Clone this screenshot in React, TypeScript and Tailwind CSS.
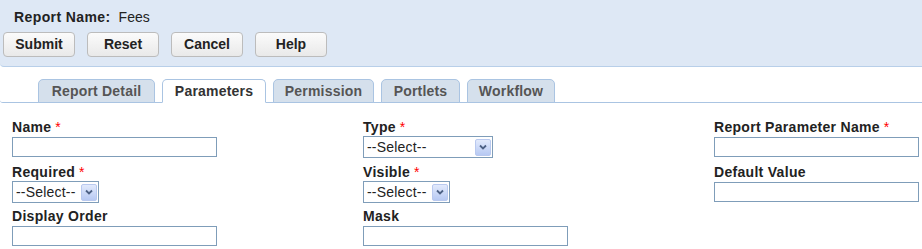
const buttons = ['Submit', 'Reset', 'Cancel', 'Help'];

const tabs = [
  { label: 'Report Detail', w: 'w-[117px]' },
  { label: 'Parameters', w: 'w-[104px]', active: true },
  { label: 'Permission', w: 'w-[101px]' },
  { label: 'Portlets', w: 'w-[79px]' },
  { label: 'Workflow', w: 'w-[88px]' },
];

function Label({ text, required }: { text: string; required?: boolean }) {
  return (
    <div className="h-[16px] leading-[16px] mb-[1px] font-bold tracking-[0.3px] text-[#222] whitespace-nowrap">
      {text}
      {required && <span className="text-[#ff0000] font-normal ml-[4px]">*</span>}
    </div>
  );
}

function TextBox({ w = 'w-[205px]' }: { w?: string }) {
  return <input type="text" className={`${w} h-[20px] border border-[#7f9db9] bg-white outline-none`} />;
}

function Select({ w }: { w: string }) {
  return (
    <div className={`${w} h-[22px] flex items-center border border-[#7f9db9] bg-white pr-[1px]`}>
      <select className="flex-1 min-w-0 h-full appearance-none bg-transparent outline-none pl-[3px] text-[14px] tracking-[0.2px] text-[#222]">
        <option>--Select--</option>
      </select>
      <span className="w-[16px] h-[17px] flex items-center justify-center rounded-[2px] border border-[#b9c9ef] bg-gradient-to-b from-[#e2eafc] to-[#b7c9f3]">
        <svg width="8" height="6" viewBox="0 0 8 6">
          <path d="M1 1.5 L4 4.5 L7 1.5" stroke="#4d6185" strokeWidth="1.8" fill="none" />
        </svg>
      </span>
    </div>
  );
}

export default function App() {
  return (
    <div className="w-[922px] h-[249px] bg-white text-[14px] font-['Liberation_Sans',Arial,sans-serif] overflow-hidden">
      <div className="h-[67px] bg-[#dee8f5] border-b border-[#b8cfe9] rounded-bl-[4px] pt-[9px]">
        <div className="h-[16px] leading-[16px] pl-[14px] text-[#222]">
          <span className="font-bold tracking-[0.4px]">Report Name:</span>
          <span className="ml-[8px]">Fees</span>
        </div>
        <div className="flex gap-[12px] pl-[3px] mt-[7px]">
          {buttons.map((b) => (
            <button
              key={b}
              className="w-[72px] h-[25px] rounded-[4px] border border-[#bcbcbc] bg-gradient-to-b from-[#fbfbfb] to-[#e9e9e9] font-bold text-[#222] text-[14px]"
            >
              {b}
            </button>
          ))}
        </div>
      </div>

      <div className="mt-[12px] flex items-end gap-[7px] pl-[38px] border-b border-[#aac4e2] rounded-bl-[3px] h-[24px]">
        {tabs.map((t) => (
          <div
            key={t.label}
            className={`${t.w} h-[24px] -mb-[1px] flex items-center justify-center rounded-t-[5px] border border-[#aac4e2] font-bold tracking-[0.2px] ${
              t.active ? 'bg-white border-b-white text-[#333]' : 'bg-[#d5e0ec] text-[#555]'
            }`}
          >
            {t.label}
          </div>
        ))}
      </div>

      <div className="grid grid-cols-[351px_351px_1fr] grid-rows-[45px_44px_auto] pl-[12px] pt-[16px]">
        <div>
          <Label text="Name" required />
          <TextBox />
        </div>
        <div>
          <Label text="Type" required />
          <Select w="w-[130px]" />
        </div>
        <div>
          <Label text="Report Parameter Name" required />
          <TextBox />
        </div>

        <div>
          <Label text="Required" required />
          <Select w="w-[87px]" />
        </div>
        <div>
          <Label text="Visible" required />
          <Select w="w-[87px]" />
        </div>
        <div>
          <Label text="Default Value" />
          <TextBox />
        </div>

        <div>
          <Label text="Display Order" />
          <TextBox />
        </div>
        <div>
          <Label text="Mask" />
          <TextBox />
        </div>
        <div />
      </div>
    </div>
  );
}
